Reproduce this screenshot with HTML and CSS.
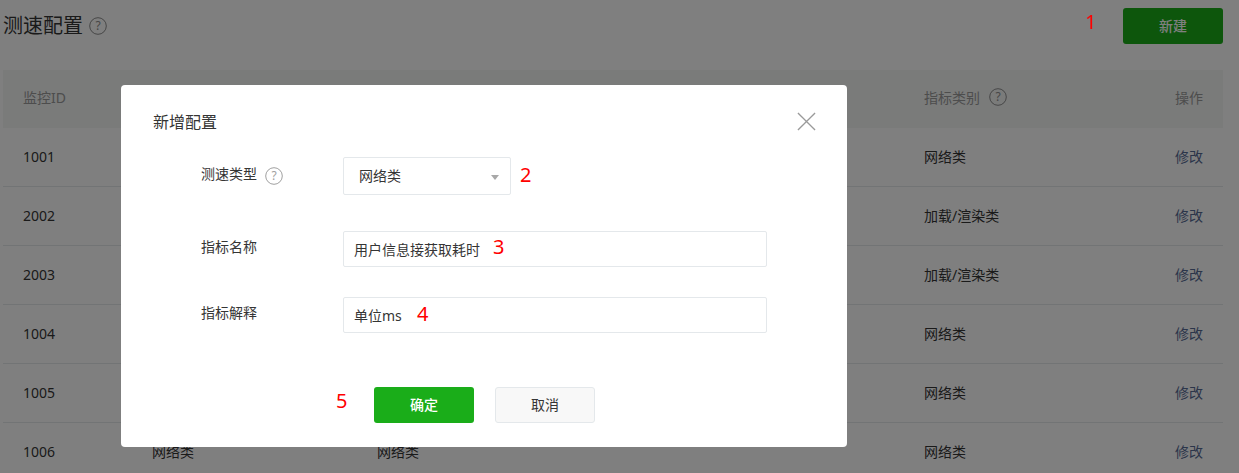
FILE: index.html
```html
<!DOCTYPE html>
<html lang="zh-CN">
<head>
    <meta charset="UTF-8">
    <title>测速配置</title>
    <link rel="stylesheet" href="styles.css">
</head>
<body>
    <div class="page">
        <div class="page-head">
            <h1 class="page-title">测速配置</h1>
            <svg class="help help-title" viewBox="0 0 18 18"><circle cx="9" cy="9" r="8.3"/><text x="9" y="13.2">?</text></svg>
            <button class="btn btn-primary btn-new">新建</button>
        </div>
        <div class="table">
            <div class="row row-head">
                <div>监控ID</div>
                <div></div>
                <div></div>
                <div class="type-head">指标类别
                    <svg class="help help-table" viewBox="0 0 18 18"><circle cx="9" cy="9" r="8.3"/><text x="9" y="13.2">?</text></svg>
                </div>
                <div class="cell-action">操作</div>
            </div>
            <div class="row"><div>1001</div><div></div><div></div><div>网络类</div><div class="cell-action"><a>修改</a></div></div>
            <div class="row"><div>2002</div><div></div><div></div><div>加载/渲染类</div><div class="cell-action"><a>修改</a></div></div>
            <div class="row"><div>2003</div><div></div><div></div><div>加载/渲染类</div><div class="cell-action"><a>修改</a></div></div>
            <div class="row"><div>1004</div><div></div><div></div><div>网络类</div><div class="cell-action"><a>修改</a></div></div>
            <div class="row"><div>1005</div><div></div><div></div><div>网络类</div><div class="cell-action"><a>修改</a></div></div>
            <div class="row"><div>1006</div><div>网络类</div><div>网络类</div><div>网络类</div><div class="cell-action"><a>修改</a></div></div>
        </div>
    </div>

    <div class="mask"></div>
    <span class="mark mark-top">1</span>

    <div class="dialog">
        <div class="dialog-title">新增配置</div>
        <svg class="dialog-close" viewBox="0 0 20 20"><path d="M1 1 L19 19 M19 1 L1 19"/></svg>
        <div class="form">
            <div class="form-row form-row-select">
                <label class="form-label">测速类型
                    <svg class="help help-form" viewBox="0 0 18 18"><circle cx="9" cy="9" r="8.3"/><text x="9" y="13.2">?</text></svg>
                </label>
                <div class="select">网络类<span class="select-arrow"></span></div>
                <span class="mark mark-2">2</span>
            </div>
            <div class="form-row">
                <label class="form-label">指标名称</label>
                <div class="input">用户信息接获取耗时<span class="mark mark-3">3</span></div>
            </div>
            <div class="form-row form-row-last">
                <label class="form-label">指标解释</label>
                <div class="input">单位ms<span class="mark mark-4">4</span></div>
            </div>
        </div>
        <div class="dialog-foot">
            <span class="mark mark-5">5</span>
            <button class="btn btn-primary">确定</button>
            <button class="btn btn-default">取消</button>
        </div>
    </div>
</body>
</html>
```

FILE: styles.css
```css
* {
    box-sizing: border-box;
}
html, body {
    margin: 0;
    height: 473px;
    overflow: hidden;
}
body {
    font-family: "Noto Sans", "Noto Sans CJK SC", sans-serif;
    font-size: 14px;
    color: #353535;
    background: #fff;
}
.page {
    padding: 8px 16px 0 3px;
}
.page-head {
    display: flex;
    align-items: center;
    height: 36px;
}
.page-title {
    margin: 0;
    font-size: 20px;
    font-weight: 400;
    line-height: 36px;
}
.help {
    flex: none;
    fill: none;
    stroke: #8d8d8d;
    stroke-width: 1;
}
.help text {
    fill: #8d8d8d;
    stroke: none;
    font-size: 12px;
    text-anchor: middle;
}
.help-title {
    width: 18px;
    height: 18px;
    margin-left: 6px;
}
.btn {
    width: 100px;
    height: 36px;
    padding: 0 0 2px;
    border: 1px solid transparent;
    border-radius: 3px;
    font-family: inherit;
    font-size: 14px;
}
.btn-primary {
    background: #1aad19;
    color: #fff;
    font-weight: 500;
}
.btn-default {
    background: #f8f8f8;
    border-color: #e4e8eb;
    color: #353535;
}
.btn-new {
    margin-left: auto;
}
.table {
    margin-top: 26px;
}
.row {
    display: grid;
    grid-template-columns: 129px 225px 547px 1fr 70px;
    align-items: center;
    height: 59px;
    padding: 0 20px 2px;
    border-bottom: 1px solid #e4e8eb;
}
.row-head {
    height: 58px;
    padding-bottom: 4px;
    background: #f4f6f5;
    border-bottom: none;
    color: #9a9a9a;
}
.type-head {
    display: flex;
    align-items: center;
    gap: 9px;
}
.help-table {
    width: 18px;
    height: 18px;
}
.cell-action {
    text-align: right;
}
.cell-action a {
    color: #576b95;
}
.mask {
    position: fixed;
    inset: 0;
    background: rgba(0, 0, 0, .5);
}
.mark {
    position: absolute;
    color: #f00;
    font-size: 20px;
    line-height: 24px;
}
.mark-top {
    left: 1085px;
    top: 10px;
}
.dialog {
    position: fixed;
    left: 121px;
    top: 85px;
    width: 726px;
    height: 362px;
    padding: 27px 32px 0;
    background: #fff;
    border-radius: 4px;
}
.dialog-title {
    font-size: 16px;
    line-height: 20px;
}
.dialog-close {
    position: absolute;
    right: 31px;
    top: 27px;
    width: 19px;
    height: 19px;
    fill: none;
    stroke: #9a9a9a;
    stroke-width: 1.4;
}
.form {
    margin-top: 25px;
    padding-left: 48px;
}
.form-row {
    position: relative;
    display: flex;
    align-items: flex-start;
    margin-bottom: 30px;
}
.form-row-select {
    margin-bottom: 36px;
}
.form-row-last {
    margin-bottom: 0;
}
.form-label {
    display: flex;
    align-items: center;
    gap: 8px;
    width: 142px;
    line-height: 20px;
    padding-top: 6px;
}
.help-form {
    width: 18px;
    height: 18px;
    margin-top: 4px;
    stroke: #a0a0a0;
}
.help-form text {
    fill: #a0a0a0;
}
.select, .input {
    position: relative;
    display: flex;
    align-items: center;
    height: 36px;
    padding-bottom: 1px;
    border: 1px solid #e4e8eb;
    border-radius: 2px;
}
.select {
    width: 168px;
    height: 38px;
    padding-left: 15px;
    padding-bottom: 3px;
}
.select-arrow {
    position: absolute;
    right: 11px;
    top: 17px;
    border: 4px solid transparent;
    border-top: 5px solid #a8a8a8;
    border-bottom: none;
}
.input {
    width: 424px;
    padding-left: 10px;
}
.mark-2 {
    left: 319px;
    top: 6px;
}
.mark-3 {
    left: 149px;
    top: 3px;
}
.mark-4 {
    left: 73px;
    top: 4px;
}
.dialog-foot {
    position: relative;
    display: flex;
    gap: 21px;
    margin-top: 54px;
    padding-left: 221px;
}
.mark-5 {
    left: 183px;
    top: 2px;
}
```
